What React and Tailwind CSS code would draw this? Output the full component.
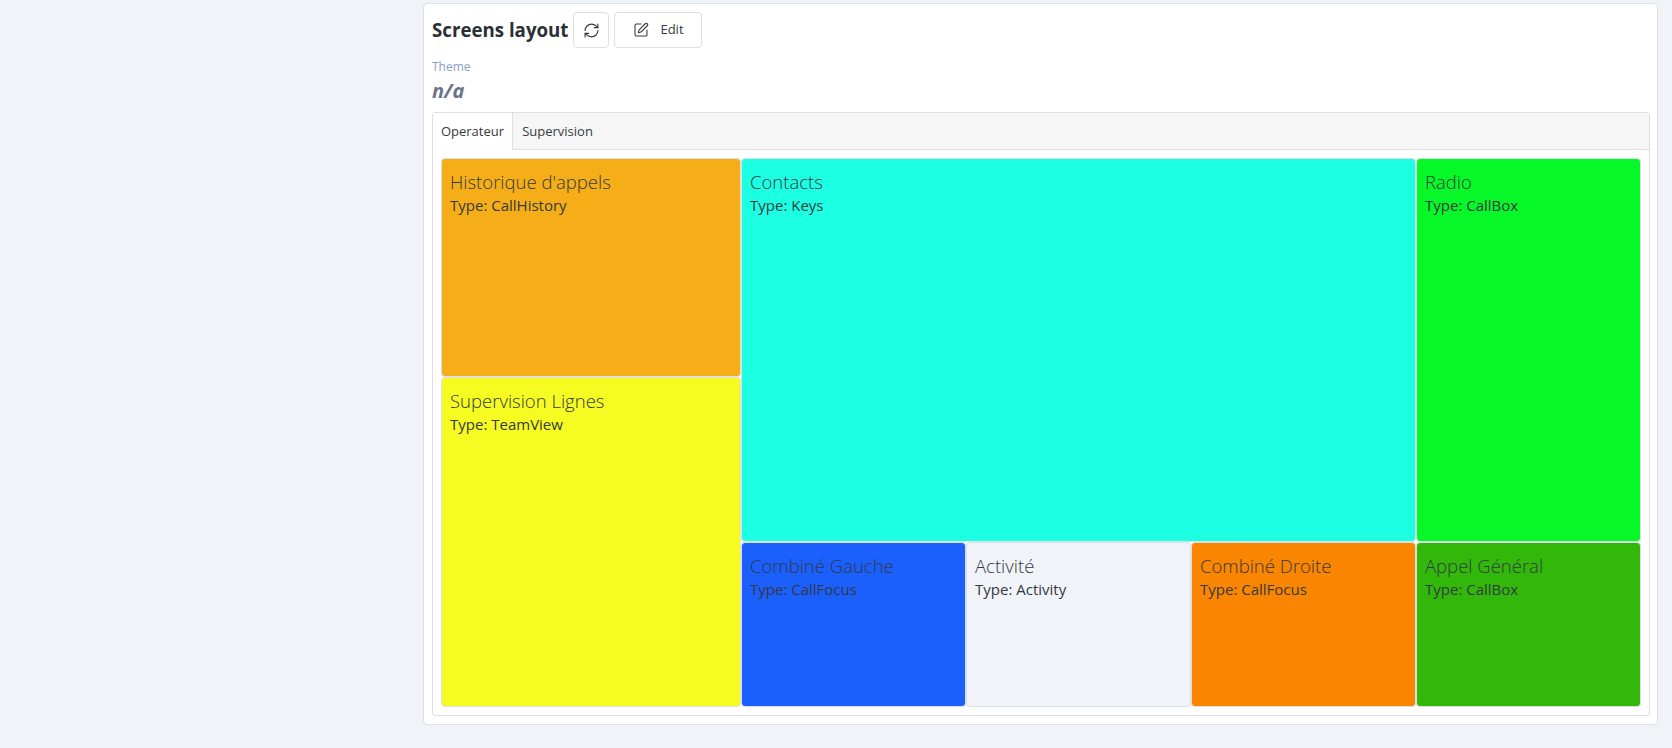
import { RefreshCw, SquarePen } from "lucide-react";

const cells = [
  { title: "Historique d'appels", type: "CallHistory", bg: "bg-[#f5ae18]", span: "col-span-4 row-span-4" },
  { title: "Contacts", type: "Keys", bg: "bg-[#1cffe3]", span: "col-span-9 row-span-7" },
  { title: "Radio", type: "CallBox", bg: "bg-[#07f828]", span: "col-span-3 row-span-7" },
  { title: "Supervision Lignes", type: "TeamView", bg: "bg-[#f6fb21]", span: "col-span-4 row-span-6" },
  { title: "Combiné Gauche", type: "CallFocus", bg: "bg-[#1b5ffc]", span: "col-span-3 row-span-3" },
  { title: "Activité", type: "Activity", bg: "bg-[#f0f3f8]", span: "col-span-3 row-span-3" },
  { title: "Combiné Droite", type: "CallFocus", bg: "bg-[#f98500]", span: "col-span-3 row-span-3" },
  { title: "Appel Général", type: "CallBox", bg: "bg-[#32b80b]", span: "col-span-3 row-span-3" },
];

const Cell = ({ title, type, bg, span }) => (
  <div className={`${span} ${bg} border border-[#dcdfe4] rounded-[4px] px-2 pt-[9px] text-[#343a40]`}>
    <div className="text-[18.5px] leading-[27px] font-light">{title}</div>
    <div className="text-[15px] leading-[20px] font-normal">Type: {type}</div>
  </div>
);

export default function App() {
  return (
    <div className="h-[748px] overflow-hidden bg-[#f0f3f8] font-['Open_Sans',sans-serif] text-[#343a40] pl-[423px] pr-[14px] pt-[3px]">
      <div className="h-[722px] bg-white border border-[#dcdfe4] rounded-[4px] pl-2 pr-[7px] pt-2 flex flex-col">
        <div className="flex items-center">
          <h1 className="text-[18.7px] leading-[36px] font-bold text-[#2b2f33]">Screens layout</h1>
          <button className="ml-[5px] w-9 h-9 flex items-center justify-center border border-[#dcdfe4] rounded-[4px] bg-white">
            <RefreshCw size={17} strokeWidth={1.6} />
          </button>
          <button className="ml-[5px] w-[88px] h-9 flex items-center justify-center gap-[11px] border border-[#dcdfe4] rounded-[4px] bg-white text-[13px]">
            <SquarePen size={16} strokeWidth={1.6} />
            Edit
          </button>
        </div>
        <div className="mt-[10px] text-[12px] leading-[18px] text-[#86a0c8]">Theme</div>
        <div className="mt-[1px] text-[20px] leading-[28px] font-bold italic text-[#6c7289]">n/a</div>
        <div className="mt-[7px] h-[604px] border border-[#dcdfe4] rounded-[3px] flex flex-col">
          <div className="h-[37px] shrink-0 flex bg-[#f6f6f7] border-b border-[#dcdfe4] text-[13px]">
            <div className="w-[80px] h-[37px] pt-[1px] flex items-center justify-center bg-white border-r border-[#dcdfe4]">Operateur</div>
            <div className="w-[89px] pt-[1px] flex items-center justify-center">Supervision</div>
          </div>
          <div className="flex-1 p-2 grid grid-cols-16 grid-rows-[repeat(7,54.8px)_repeat(3,55.1px)]">
            {cells.map((c) => (
              <Cell key={c.title} {...c} />
            ))}
          </div>
        </div>
      </div>
    </div>
  );
}
